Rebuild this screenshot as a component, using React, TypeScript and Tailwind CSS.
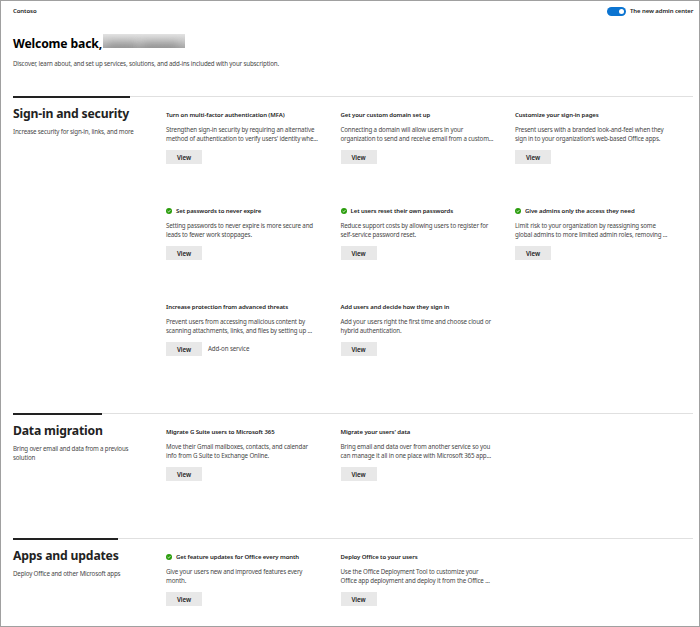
import React from "react";

type Card = { title: string; lines: [string, string]; done?: boolean; note?: string };
type Section = { title: string; text: string[]; bar: string; cards: Card[] };

const sections: Section[] = [
  {
    title: "Sign-in and security",
    text: ["Increase security for sign-in, links, and more"],
    bar: "w-[117px]",
    cards: [
      { title: "Turn on multi-factor authentication (MFA)", lines: ["Strengthen sign-in security by requiring an alternative", "method of authentication to verify users' identity whe..."] },
      { title: "Get your custom domain set up", lines: ["Connecting a domain will allow users in your", "organization to send and receive email from a custom..."] },
      { title: "Customize your sign-in pages", lines: ["Present users with a branded look-and-feel when they", "sign in to your organization's web-based Office apps."] },
      { title: "Set passwords to never expire", done: true, lines: ["Setting passwords to never expire is more secure and", "leads to fewer work stoppages."] },
      { title: "Let users reset their own passwords", done: true, lines: ["Reduce support costs by allowing users to register for", "self-service password reset."] },
      { title: "Give admins only the access they need", done: true, lines: ["Limit risk to your organization by reassigning some", "global admins to more limited admin roles, removing ..."] },
      { title: "Increase protection from advanced threats", note: "Add-on service", lines: ["Prevent users from accessing malicious content by", "scanning attachments, links, and files by setting up ..."] },
      { title: "Add users and decide how they sign in", lines: ["Add your users right the first time and choose cloud or", "hybrid authentication."] },
    ],
  },
  {
    title: "Data migration",
    text: ["Bring over email and data from a previous", "solution"],
    bar: "w-[89px]",
    cards: [
      { title: "Migrate G Suite users to Microsoft 365", lines: ["Move their Gmail mailboxes, contacts, and calendar", "info from G Suite to Exchange Online."] },
      { title: "Migrate your users' data", lines: ["Bring email and data over from another service so you", "can manage it all in one place with Microsoft 365 app..."] },
    ],
  },
  {
    title: "Apps and updates",
    text: ["Deploy Office and other Microsoft apps"],
    bar: "w-[105px]",
    cards: [
      { title: "Get feature updates for Office every month", done: true, lines: ["Give your users new and improved features every", "month."] },
      { title: "Deploy Office to your users", lines: ["Use the Office Deployment Tool to customize your", "Office app deployment and deploy it from the Office ..."] },
    ],
  },
];

function Check() {
  return (
    <svg viewBox="0 0 12 12" className="mr-[4px] h-[6px] w-[6px] shrink-0">
      <circle cx="6" cy="6" r="6" fill="#2a9d0c" />
      <path d="M3.2 6.2 5.2 8.1 8.9 4.2" fill="none" stroke="#fff" strokeWidth="1.5" />
    </svg>
  );
}

function CardView({ card }: { card: Card }) {
  return (
    <article className="h-[96px] whitespace-nowrap pt-[13px]">
      <h3 className="flex h-[11px] items-center text-[6px] leading-[10px] font-semibold tracking-[-0.08px] text-[#222]">
        {card.done && <Check />}
        <span>{card.title}</span>
      </h3>
      <div className="mt-[5px] text-[6.2px] leading-[9px] tracking-[-0.155px] text-[#484848]">
        {card.lines.map((l) => (
          <p key={l}>{l}</p>
        ))}
      </div>
      <div className="mt-[7px] flex">
        <button className="h-[14px] w-[36px] bg-[#e8e8e8] pt-px text-[6.2px] leading-[13px] font-semibold tracking-[-0.1px] text-[#222]">View</button>
        {card.note && <span className="ml-[6px] text-[6.2px] leading-[13px] tracking-[-0.12px] text-[#484848]">{card.note}</span>}
      </div>
    </article>
  );
}

export default function App() {
  return (
    <main className="h-[627px] w-[700px] overflow-hidden border border-[#a0a0a0] bg-white pl-[12px] pr-[6px] font-['Noto_Sans','Open_Sans',sans-serif] text-[#222]">
      <header className="flex h-[21px] items-center justify-between text-[6px] font-semibold tracking-[-0.09px]">
        <span className="text-[#222]">Contoso</span>
        <div className="flex items-center gap-[4px]">
          <span className="flex h-[9px] w-[19px] items-center justify-end rounded-full bg-[#0b74d1] pr-[2px]">
            <i className="h-[5px] w-[5px] rounded-full bg-white" />
          </span>
          <span className="w-[63px] whitespace-nowrap">The new admin center</span>
        </div>
      </header>
      <div className="h-[74px]">
        <div className="flex pt-[12px]">
          <h1 className="w-[90px] text-[12.2px] leading-[20px] font-bold tracking-[-0.15px] whitespace-nowrap text-black">Welcome back,</h1>
          <div className="relative h-[14px] w-[82px] overflow-hidden bg-linear-to-b from-[#e3e3e3] via-[#c8c8c8] to-[#a8a8a8]">
            <i className="absolute top-[9px] left-[5px] h-[8px] w-[28px] bg-[#777]/50 blur-[4px]" />
            <i className="absolute top-[9px] left-[39px] h-[8px] w-[36px] bg-[#777]/50 blur-[4px]" />
          </div>
        </div>
        <p className="pt-px text-[6.2px] leading-[18px] tracking-[-0.155px] text-[#484848]">Discover, learn about, and set up services, solutions, and add-ins included with your subscription.</p>
      </div>
      {sections.map((s, i) => (
        <section key={s.title} className={i === 0 ? "h-[317px]" : "h-[125px]"}>
          <div className="flex items-start">
            <div className={`h-[2px] bg-[#222] ${s.bar}`} />
            <div className="h-px flex-1 bg-[#e0e0e0]" />
          </div>
          <div className="-mt-[2px] flex">
            <div className="w-[153px] shrink-0 pt-[8px]">
              <h2 className="text-[12.2px] leading-[20px] font-bold tracking-[-0.18px] whitespace-nowrap">{s.title}</h2>
              <div className="mt-[3px] text-[6.2px] leading-[9px] tracking-[-0.17px] text-[#484848]">
                {s.text.map((t) => (
                  <p key={t}>{t}</p>
                ))}
              </div>
            </div>
            <div className="grid shrink-0 grid-cols-[174.5px_174.5px_174.5px]">
              {s.cards.map((c) => (
                <CardView key={c.title} card={c} />
              ))}
            </div>
          </div>
        </section>
      ))}
    </main>
  );
}
